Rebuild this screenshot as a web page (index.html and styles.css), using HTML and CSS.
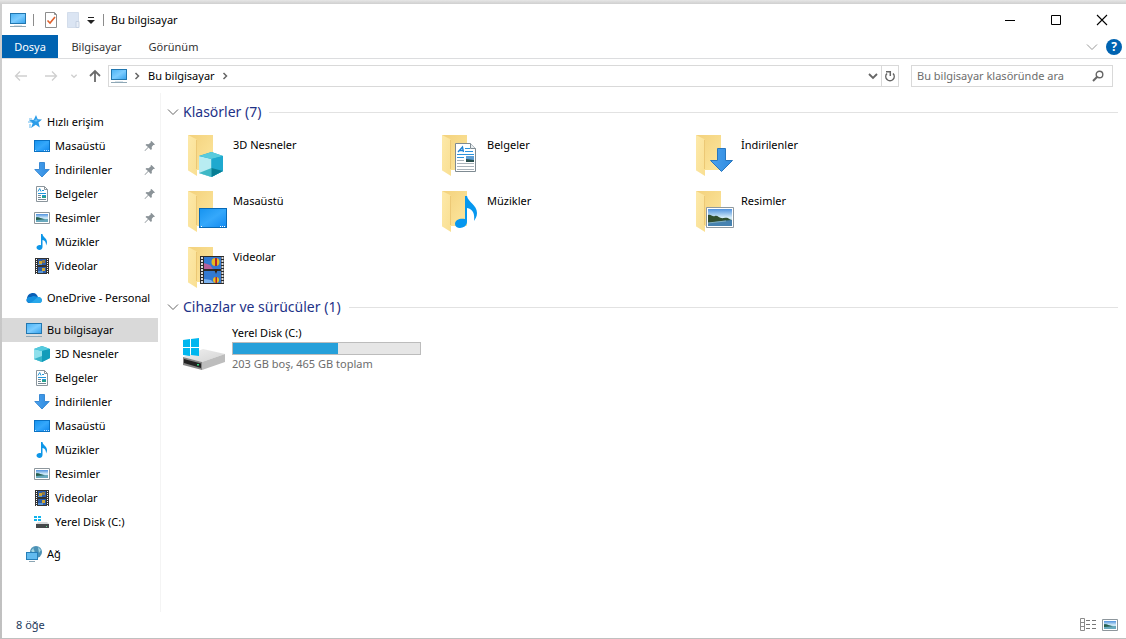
FILE: index.html
```html
<!DOCTYPE html>
<html lang="tr">
<head>
<meta charset="utf-8">
<title>Bu bilgisayar</title>
<link rel="stylesheet" href="styles.css">
</head>
<body>
<svg class="defs" aria-hidden="true">
  <defs>
    <linearGradient id="g-screen" x1="0" y1="0" x2="1" y2="1"><stop offset="0" stop-color="#4db4f5"/><stop offset=".5" stop-color="#7cccff"/><stop offset="1" stop-color="#3aa5ee"/></linearGradient>
    <linearGradient id="g-desk" x1="0" y1="0" x2="1" y2="1"><stop offset="0" stop-color="#1794f0"/><stop offset=".5" stop-color="#35a8fb"/><stop offset="1" stop-color="#128af0"/></linearGradient>
    <linearGradient id="g-front" x1="0" y1="0" x2="1" y2="1"><stop offset="0" stop-color="#fde9a9"/><stop offset="1" stop-color="#f9df92"/></linearGradient>
    <linearGradient id="g-back" x1="0" y1="0" x2="1" y2="1"><stop offset="0" stop-color="#f3d17c"/><stop offset="1" stop-color="#fde79f"/></linearGradient>
    <linearGradient id="g-sky" x1="0" y1="0" x2="0" y2="1"><stop offset="0" stop-color="#4f92de"/><stop offset=".5" stop-color="#d3ebf8"/><stop offset="1" stop-color="#a9d3ea"/></linearGradient>
    <linearGradient id="g-arrow" x1="0" y1="0" x2="1" y2="0"><stop offset="0" stop-color="#4ba2ee"/><stop offset="1" stop-color="#2f8be0"/></linearGradient>
    <linearGradient id="g-disk" x1="0" y1="0" x2="1" y2="1"><stop offset="0" stop-color="#f0f0f0"/><stop offset="1" stop-color="#d4d4d4"/></linearGradient>
  </defs>
  <symbol id="pc" viewBox="0 0 16 16"><path d="M0 1h16v11H0z" fill="#2277b0"/><path d="M1 2h14v9H1z" fill="url(#g-screen)"/><path d="M4 13h8v1H4z" fill="#d8e3ea"/><path d="M0 14h16v1H0z" fill="#8fa7b5"/></symbol>
  <symbol id="star" viewBox="0 0 16 16"><path d="M10 1l1.700 4.300 4.300.2-3.500 2.900 1.300 5-4-2.700L5 14l1.700-4.800L3 6.300l4.800-.6z" fill="#2b9ce8"/><path d="M3 5h3M2 8h4M3 11h2M3 13h2" stroke="#62b8ef"/><path d="M10 4l1 2.500 2 .3-3 .7-2.500-.8 2-.5z" fill="#79c9fb"/></symbol>
  <symbol id="desktop" viewBox="0 0 16 16"><path d="M0 2h16v12H0z" fill="#0a72c4"/><path d="M1 3h14v10H1z" fill="url(#g-desk)"/><path d="M1 12.500h1m8 0h1m1 0h1m1 0h1" stroke="#c7e5fc"/></symbol>
  <symbol id="down" viewBox="0 0 16 16"><path d="M5.500.5h5v7h4.700L8 15 .8 7.500h4.700z" fill="url(#g-arrow)" stroke="#3b8ad4"/></symbol>
  <symbol id="doc" viewBox="0 0 16 16"><path d="M2.500.5h8l3 3v12h-11z" fill="#fff" stroke="#8b959c"/><path d="M10.500.5v3h3" fill="none" stroke="#8b959c"/><path d="M4 5.500l1.700-3L7 5.500M8 4.500h2M4 7.500h8M8 9.500h4" fill="none" stroke="#2496d8"/><path d="M4 9.500h3M4 11.500h3M4 13.500h8" stroke="#758894"/><path d="M8 10h4v2H8z" fill="#25a08e"/></symbol>
  <symbol id="picture" viewBox="0 0 16 16"><path d="M.5 2.500h15v11H.5z" fill="#fff" stroke="#8d969c"/><path d="M2 4h12v8H2z" fill="url(#g-sky)"/><path d="M2 7c3 0 4 2 12 2v3H2z" fill="#69a9bd"/><path d="M2 7.500c3-1 5 1.500 9 1.800L2 10z" fill="#275f4d"/></symbol>
  <symbol id="music" viewBox="0 0 16 16"><path d="M7 0h1.500c0 3 4.500 4 4.500 8 0 1.500-.5 2.500-1 3.500.2-3-1-5-3.500-5.500v7c0 4-6 3.500-6 .5 0-2 2.500-3 4.500-2.300z" fill="#0d96e8"/></symbol>
  <symbol id="video" viewBox="0 0 16 16"><path d="M1 0h14v16H1z" fill="#333"/><path d="M4 1h8v6H4zM4 9h8v6H4z" fill="#2c5da9"/><path d="M2.500 1v15M13.500 1v15" stroke="#fff" stroke-dasharray="1 1"/><path d="M5 3h3v3H5zM8 10h3v3H8z" fill="#cfa632"/><path d="M8 2h3v3H8z" fill="#8f7845"/><path d="M4 6h4v1H4zM4 13h5v2H4z" fill="#5795d6"/></symbol>
  <symbol id="cloud" viewBox="0 0 16 16"><path d="M1 9C1 5 4 3 7 3s4 2 5 4l-8 6C1 13 0 11 1 9z" fill="#0a5fb5"/><path d="M5 7c3-2 5 0 7 0 5 0 5 6 1 6H4C0 13-1 8 3 7z" fill="#1490df"/><path d="M6 12l6-5c5 0 5 6 1 6H4z" fill="#28a8ea"/></symbol>
  <symbol id="cube" viewBox="0 0 16 16"><path d="M8 0l8 3v9l-8 4-8-3V3z" fill="#20adc9"/><path d="M0 3l8 2v11l-8-3z" fill="#8fe0ec"/><path d="M8 0l8 3-8 2-8-2z" fill="#55cade"/><path d="M8 5l8-2v9l-8 4z" fill="#129cba"/><path d="M0 13l8-3v6z" fill="#39b5ca"/></symbol>
  <symbol id="drive" viewBox="0 0 16 16"><path d="M0 2h3v2H0zm4 0h3v2H4zM0 5h3v2H0zm4 0h3v2H4z" fill="#12b4ed"/><path d="M4 8h9l2 2H2z" fill="#d7d9da"/><path d="M2 10h13v4H2z" fill="#46494b"/><path d="M12 12h1v1h-1z" fill="#61dd8d"/></symbol>
  <symbol id="network" viewBox="0 0 16 16"><circle cx="10" cy="6" r="6" fill="#4b91b5"/><path d="M8 1c-2 3 2 3 0 6L5 5zm4 0l3 3-2 3z" fill="#a2d6e3"/><path d="M0 6h12v8H0z" fill="#267fb8"/><path d="M1 7h10v6H1z" fill="#62bbef"/><path d="M3 15.500h6" stroke="#8ba5b3"/></symbol>
  <symbol id="pin" viewBox="0 0 12 12"><path d="M7.500 1L11 4.500l-1 .6-.7-.2-1.600 2 .2 2-1 1L4.500 7.500 1 11l-.5-.5L4 7 1.500 5l1-1 2 .2 2.200-1.700L6.600 1.600z" fill="#8b9398"/></symbol>
  <symbol id="chev-down" viewBox="0 0 12 12"><path d="M1 3.500l5 5 5-5" fill="none" stroke="currentColor"/></symbol>
  <symbol id="chev-right" viewBox="0 0 6 8"><path d="M1.500 1l3 3-3 3" fill="none" stroke="currentColor" stroke-width="1.500"/></symbol>
  <symbol id="folder" viewBox="0 0 44 44"><path d="M1 1h25v35H7z" fill="url(#g-back)"/><path d="M1 1l8 4c1 1 1 2 1 3v34L2 37c-1 0-1-1-1-2z" fill="url(#g-front)"/><path d="M9.500 6v29" stroke="#e5bd65" stroke-width=".7"/></symbol>
</svg>
<div class="window">
  <header class="titlebar">
    <svg class="i16"><use href="#pc"/></svg>
    <span class="sep sep-first"></span>
    <button class="quick" aria-label="Özellikler"><svg class="i16" viewBox="0 0 16 16"><path d="M2.500.5h9l2 2v13h-11z" fill="#fff" stroke="#8d8d8d"/><path d="M11.500.5v2h2" fill="none" stroke="#8d8d8d"/><path d="M4.500 8.500L7 11l5-6" fill="none" stroke="#e0602c" stroke-width="1.600"/></svg></button>
    <button class="quick" aria-label="Yeni klasör"><svg class="i16" viewBox="0 0 16 16"><path d="M2.500.5h11v15h-11z" fill="#dbe5f3" stroke="#d3ddeb"/><path d="M11 9.500h3v6h-3z" fill="#e9eff8" stroke="#c5d1e2"/></svg></button>
    <button class="quick quick-more" aria-label="Araç çubuğunu özelleştir"><svg viewBox="0 0 8 8"><path d="M1 1.500h6" stroke="#222"/><path d="M0 4h8L4 8z" fill="#222"/></svg></button>
    <span class="sep"></span>
    <h1>Bu bilgisayar</h1>
    <div class="controls">
      <button aria-label="Simge durumuna küçült"><svg viewBox="0 0 12 12"><path d="M1 6.500h10" stroke="#000"/></svg></button>
      <button aria-label="Ekranı kapla"><svg viewBox="0 0 12 12"><path d="M1.500 1.500h9v9h-9z" fill="none" stroke="#000"/></svg></button>
      <button aria-label="Kapat"><svg viewBox="0 0 12 12"><path d="M1 1l10 10M11 1L1 11" stroke="#000" stroke-width="1.100"/></svg></button>
    </div>
  </header>
  <nav class="ribbon" aria-label="Şerit">
    <button class="tab file">Dosya</button><button class="tab">Bilgisayar</button><button class="tab">Görünüm</button>
    <button class="expand" aria-label="Şeridi genişlet"><svg viewBox="0 0 12 12"><use href="#chev-down"/></svg></button>
    <button class="help" aria-label="Yardım">?</button>
  </nav>
  <div class="addressbar">
    <button class="nav off" aria-label="Geri"><svg viewBox="0 0 14 14"><path d="M13 7H2M6 2.500L1.500 7 6 11.500" fill="none" stroke="currentColor" stroke-width="1.300"/></svg></button>
    <button class="nav off" aria-label="İleri"><svg viewBox="0 0 14 14"><path d="M1 7h11M8 2.500L12.500 7 8 11.500" fill="none" stroke="currentColor" stroke-width="1.300"/></svg></button>
    <button class="nav off recent" aria-label="Son konumlar"><svg viewBox="0 0 12 12"><path d="M2 4l4 4 4-4" fill="none" stroke="currentColor" stroke-width="2"/></svg></button>
    <button class="nav up" aria-label="Yukarı"><svg viewBox="0 0 14 14"><path d="M7 13V2M2 7l5-5 5 5" fill="none" stroke="currentColor" stroke-width="1.800"/></svg></button>
    <div class="path">
      <svg class="i16"><use href="#pc"/></svg>
      <svg class="crumb"><use href="#chev-right"/></svg>
      <a href="#pc-root">Bu bilgisayar</a>
      <svg class="crumb"><use href="#chev-right"/></svg>
      <button class="history" aria-label="Önceki konumlar"><svg viewBox="0 0 10 10"><path d="M1 3l4 4 4-4" fill="none" stroke="currentColor" stroke-width="1.800"/></svg></button>
      <button class="refresh" aria-label="Yenile"><svg viewBox="0 0 12 12"><path d="M3 3.500a4.200 4.200 0 1 0 6 0" fill="none" stroke="currentColor" stroke-width="1.500"/><path d="M2 1.700h4.300V6" fill="none" stroke="currentColor" stroke-width="1.500"/></svg></button>
    </div>
    <label class="search">
      <input type="search" aria-label="Ara" placeholder="Bu bilgisayar klasöründe ara">
      <svg viewBox="0 0 12 12"><circle cx="7.500" cy="4.500" r="3.300" fill="none" stroke="currentColor" stroke-width="1.400"/><path d="M5 7L1 11" stroke="currentColor" stroke-width="2"/></svg>
    </label>
  </div>
  <div class="body">
    <nav class="tree" aria-label="Gezinti bölmesi">
      <div class="group">
        <a href="#quick"><svg class="i16"><use href="#star"/></svg>Hızlı erişim</a>
        <a class="sub" href="#desktop"><svg class="i16"><use href="#desktop"/></svg>Masaüstü<svg class="pin"><use href="#pin"/></svg></a>
        <a class="sub" href="#down"><svg class="i16"><use href="#down"/></svg>İndirilenler<svg class="pin"><use href="#pin"/></svg></a>
        <a class="sub" href="#doc"><svg class="i16"><use href="#doc"/></svg>Belgeler<svg class="pin"><use href="#pin"/></svg></a>
        <a class="sub" href="#picture"><svg class="i16"><use href="#picture"/></svg>Resimler<svg class="pin"><use href="#pin"/></svg></a>
        <a class="sub" href="#music"><svg class="i16"><use href="#music"/></svg>Müzikler</a>
        <a class="sub" href="#video"><svg class="i16"><use href="#video"/></svg>Videolar</a>
      </div>
      <div class="group"><a href="#cloud"><svg class="i16"><use href="#cloud"/></svg>OneDrive - Personal</a></div>
      <div class="group">
        <a class="selected" aria-current="page" href="#pc"><svg class="i16"><use href="#pc"/></svg>Bu bilgisayar</a>
        <a class="sub" href="#cube"><svg class="i16"><use href="#cube"/></svg>3D Nesneler</a>
        <a class="sub" href="#doc"><svg class="i16"><use href="#doc"/></svg>Belgeler</a>
        <a class="sub" href="#down"><svg class="i16"><use href="#down"/></svg>İndirilenler</a>
        <a class="sub" href="#desktop"><svg class="i16"><use href="#desktop"/></svg>Masaüstü</a>
        <a class="sub" href="#music"><svg class="i16"><use href="#music"/></svg>Müzikler</a>
        <a class="sub" href="#picture"><svg class="i16"><use href="#picture"/></svg>Resimler</a>
        <a class="sub" href="#video"><svg class="i16"><use href="#video"/></svg>Videolar</a>
        <a class="sub" href="#drive"><svg class="i16"><use href="#drive"/></svg>Yerel Disk (C:)</a>
      </div>
      <div class="group"><a href="#network"><svg class="i16"><use href="#network"/></svg>Ağ</a></div>
    </nav>
    <main class="content">
      <section>
        <h2><svg><use href="#chev-down"/></svg>Klasörler (7)</h2>
        <div class="folders">
          <a href="#cube"><svg class="i44" viewBox="0 0 44 44"><use href="#folder"/><path d="M24.500 18L36 22v15l-11.500 6L12 39V22z" fill="#16a6c8"/><path d="M12 22l12.500 3v18L12 39z" fill="#b8ecf2"/><path d="M12 22l12.500-4L36 22l-11.500 3z" fill="#58cbdd"/><path d="M24.500 25L36 22v15l-11.500 6z" fill="#1fa9cf"/><path d="M12 39l12.500-5v9z" fill="#3fb8c6"/><path d="M24.500 34L36 37l-11.500 6z" fill="#087e94"/></svg><span>3D Nesneler</span></a>
          <a href="#doc"><svg class="i44" viewBox="0 0 44 44"><use href="#folder"/><path d="M14.500 9.500h15l5 5v23h-20z" fill="#fff" stroke="#7f8b92"/><path d="M29.500 9.500v5h5" fill="#e9eef1" stroke="#7f8b92"/><path d="M17 18l4.500-5 1 5M18.500 16.500h4" fill="none" stroke="#1e83d6" stroke-width="1.300"/><path d="M24 14.500h5M24 17.500h8M16 20.500h17M16 23.500h7" stroke="#2b93dd"/><path d="M16 26.500h7M16 29.500h17M16 32.500h17M16 35.500h17" stroke="#a9b3bb"/><path d="M25 22h8v6h-8z" fill="#5f9fd4"/><path d="M25 25l8 1v2h-8z" fill="#274e4c"/></svg><span>Belgeler</span></a>
          <a href="#down"><svg class="i44" viewBox="0 0 44 44"><use href="#folder"/><path d="M22.500 14.500h8v12h7L26.500 37.500 15.500 26.500h7z" fill="url(#g-arrow)" stroke="#2877bf"/></svg><span>İndirilenler</span></a>
          <a href="#desktop"><svg class="i44" viewBox="0 0 44 44"><use href="#folder"/><path d="M12 18h28v20H12z" fill="#0869b5"/><path d="M13 19h26v18H13z" fill="url(#g-desk)"/><path d="M14 36.500h1m18 0h1m1 0h1m1 0h1" stroke="#fff"/></svg><span>Masaüstü</span></a>
          <a href="#music"><svg class="i44" viewBox="0 0 44 44"><use href="#folder"/><path d="M24 6h2c1 6 10 9 10 17 0 4-2 6-3 8 1-7-1-12-7-13v14c0 7-12 8-12 2 0-5 6-6 10-5z" fill="#0697ef"/></svg><span>Müzikler</span></a>
          <a href="#picture"><svg class="i44" viewBox="0 0 44 44"><use href="#folder"/><path d="M11.500 17.500h27v20h-27z" fill="#fff" stroke="#8f999f"/><path d="M13 19h24v17H13z" fill="url(#g-sky)"/><path d="M13 30h24v6H13z" fill="#4682b0"/><path d="M13 25c3-1 4 2 7 1s4 3 9 2 5 2 8 2l-11 1-13 2z" fill="#304e2f"/><path d="M13 33l18-2" stroke="#80aebe"/></svg><span>Resimler</span></a>
          <a href="#video"><svg class="i44" viewBox="0 0 44 44"><use href="#folder"/><path d="M13 10h24v28H13z" fill="#2b2b2b"/><path d="M17 11h17v12H17zM17 25h17v12H17z" fill="#3279d2"/><path d="M15 11v27M35.500 11v27" stroke="#ddd" stroke-width="2" stroke-dasharray="2 1"/><path d="M17 17l6 2 3 4h-9z" fill="#b5609b"/><path d="M17 33l7 1 3 3H17z" fill="#7bb2ee"/><circle cx="28.500" cy="16" r="4" fill="#e6ba20"/><path d="M28 12h2v8h-2z" fill="#b7222c"/><path d="M27 23h4l-2 5z" fill="#342111"/><circle cx="29" cy="34" r="3" fill="#e9bf20"/><path d="M28.500 31h1.500v6h-1.500z" fill="#b7222c"/></svg><span>Videolar</span></a>
        </div>
      </section>
      <section>
        <h2><svg><use href="#chev-down"/></svg>Cihazlar ve sürücüler (1)</h2>
        <a class="disk" href="#drive">
          <svg class="i44" viewBox="0 0 44 44"><path d="M0 27l20-8 22 5-23 8z" fill="url(#g-disk)"/><path d="M0 27l19 5v8L0 35z" fill="#858585"/><path d="M1 29l17 4.500V38L1 33z" fill="#222"/><path d="M19 32l23-8v8L19 40z" fill="#bdbdbd"/><path d="M14 34h2v1.500h-2z" fill="#35dc82"/><path d="M0 10l7-1v8H0zM8 9l8-1v9H8zM0 18h7v8l-7-1zM8 18h8v8l-8-1z" fill="#00b7ef"/></svg>
          <span class="info"><span>Yerel Disk (C:)</span><progress value="262" max="465" aria-label="Kullanılan alan"></progress><span class="free">203 GB boş, 465 GB toplam</span></span>
        </a>
      </section>
    </main>
  </div>
  <footer class="status">
    <span>8 öğe</span>
    <button aria-label="Ayrıntılar"><svg class="i16" viewBox="0 0 16 16"><path d="M.5 1.500h4v12h-4zM.5 5.500h4M.5 9.500h4" fill="none" stroke="#8b8b8b"/><path d="M6 3.500h4m2 0h4M6 7.500h4m2 0h4M6 11.500h4m2 0h4" stroke="#777"/></svg></button>
    <button aria-label="Büyük simgeler"><svg class="i16"><use href="#picture"/></svg></button>
  </footer>
</div>
</body>
</html>
```
FILE: styles.css
```css
* { box-sizing: border-box; }
body {
  margin: 0;
  min-height: 100vh;
  display: flex;
  padding: 4px 0 1px 2px;
  background: linear-gradient(#e6e6e6, #cfcfcf 4px, #c0c0c0);
  font: 11px/16px "Noto Sans", "Open Sans", sans-serif;
  color: #000;
}
svg { display: block; flex: none; }
a { color: inherit; text-decoration: none; }
button {
  margin: 0; padding: 0; border: 0;
  background: none; font: inherit; color: inherit;
  display: flex; align-items: center; justify-content: center;
}
.defs { position: absolute; width: 0; height: 0; }
.i16 { width: 16px; height: 16px; }
.i44 { width: 44px; height: 44px; }
.window { flex: 1; display: flex; flex-direction: column; background: #fff; min-width: 0; }

.titlebar { display: flex; align-items: center; height: 31px; padding: 0 1px 0 8px; }
.sep { width: 1px; height: 12px; background: #8c8c8c; margin: 0 7px 0 8px; }
.sep-first { margin: 0 9px 0 7px; }
.quick { margin-right: 6px; }
.quick-more { margin: 0; }
.quick-more svg { width: 8px; height: 8px; }
h1 { margin: 0; font: inherit; flex: 1; }
.controls { display: flex; align-self: stretch; }
.controls button { width: 46px; }
.controls svg { width: 12px; height: 12px; }

.ribbon { display: flex; height: 24px; border-bottom: 1px solid #dcdddf; padding-right: 4px; }
.tab { width: 77px; color: #333; }
.file { width: 56px; background: #0063b1; color: #fff; }
.expand { margin-left: auto; margin-right: 8px; color: #999; }
.expand svg { width: 12px; height: 12px; }
.help { align-self: center; width: 16px; height: 16px; border-radius: 50%; background: #0063b1; color: #fff; font-weight: bold; font-size: 12px; }

.addressbar { display: flex; align-items: center; padding: 6px 13px 6px 4px; height: 34px; }
.nav { width: 30px; color: #6b6b6b; }
.nav svg { width: 14px; height: 14px; }
.off { color: #cfcfcf; }
.nav.recent { width: 16px; }
.nav.recent svg { width: 8px; height: 8px; }
.nav.up { width: 26px; }
.path { flex: 1; display: flex; align-items: center; height: 22px; border: 1px solid #d9d9d9; padding-left: 2px; }
.crumb { width: 6px; height: 8px; margin: 0 8px 0 7px; color: #666; }
.history { margin-left: auto; width: 16px; color: #666; }
.history svg { width: 10px; height: 10px; }
.refresh { width: 17px; align-self: stretch; border-left: 1px solid #d9d9d9; color: #666; }
.refresh svg { width: 12px; height: 12px; }
.search { display: flex; align-items: center; width: 202px; height: 22px; margin-left: 12px; padding: 0 8px 0 5px; border: 1px solid #d9d9d9; color: #666; }
.search input { flex: 1; min-width: 0; padding: 0; border: 0; outline: 0; background: none; font: inherit; }
.search input::placeholder { color: #6d6d6d; opacity: 1; }
.search svg { width: 12px; height: 12px; }

.body { flex: 1; display: flex; }
.tree { width: 159px; padding: 17px 2px 0 0; border-right: 1px solid #f4f4f4; }
.group { margin-bottom: 8px; }
.tree a { display: flex; align-items: center; gap: 5px; height: 24px; padding: 0 2px 0 24px; white-space: nowrap; }
.tree a.sub { padding-left: 32px; }
.tree a.selected { background: #d9d9d9; }
.pin { width: 12px; height: 12px; margin-left: auto; }

.content { flex: 1; padding: 8px 8px 0 6px; }
h2 { display: flex; align-items: center; gap: 4px; margin: 0; font-size: 14px; line-height: 22px; font-weight: normal; color: #1e3287; }
h2 svg { width: 12px; height: 12px; color: #666; }
h2::after { content: ""; flex: 1; height: 1px; margin-left: 4px; background: #e2e2e2; }
.folders { display: grid; grid-template-columns: repeat(auto-fill, 254px); grid-auto-rows: 44px; row-gap: 12px; padding: 11px 0 0 20px; margin-bottom: 6px; }
.folders a { display: flex; gap: 2px; }
.folders span { padding-top: 3px; }
.disk { display: flex; align-items: flex-end; gap: 5px; padding: 7px 0 0 16px; }
.info { display: flex; flex-direction: column; width: 189px; padding-bottom: 2px; }
.free { color: #6d6d6d; }
progress { appearance: none; display: block; width: 100%; height: 13px; margin: 1px 0; border: 1px solid #bcbcbc; background: #e6e6e6; }
progress::-webkit-progress-bar { background: #e6e6e6; }
progress::-webkit-progress-value { background: #26a0da; }

.status { display: flex; align-items: center; gap: 6px; height: 26px; padding: 0 8px 0 14px; color: #1e395b; }
.status span { flex: 1; }
```
